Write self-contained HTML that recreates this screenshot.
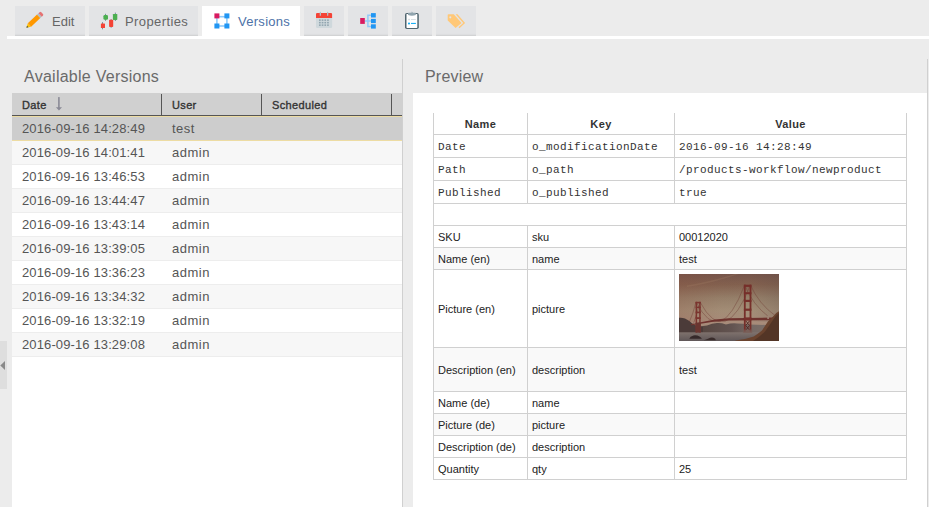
<!DOCTYPE html>
<html>
<head>
<meta charset="utf-8">
<title>Versions</title>
<style>
html,body{margin:0;padding:0;}
body{width:929px;height:507px;overflow:hidden;background:#ececec;position:relative;font-family:"Liberation Sans",sans-serif;color:#555;}
.abs{position:absolute;}
/* tab bar */
.tab{position:absolute;top:6px;height:30px;background:#e3e4e6;box-shadow:inset 0 -3px 2px -2px rgba(0,0,0,0.10);}
.tab.active{background:#fff;box-shadow:none;height:33px;}
.tab span{position:absolute;top:8px;font-size:13px;line-height:16px;color:#666;white-space:nowrap;}
.tab.active span{color:#4d72a8;}
.tab svg{position:absolute;left:0;top:0;}
#tabline{position:absolute;left:7px;top:36px;width:922px;height:3px;background:#fff;}
/* panels */
.ptitle{position:absolute;top:67px;font-size:16px;line-height:20px;color:#6a6a6a;white-space:nowrap;}
.vline{position:absolute;top:59px;width:1px;height:448px;background:#d0d0d0;}
#grid{position:absolute;left:12px;top:93px;width:390px;height:414px;background:#fff;}
#ghead{position:absolute;left:0;top:0;width:390px;height:22px;background:#d0d0d0;border-bottom:1px solid #555;}
#ghead span{position:absolute;top:5px;font-size:11px;line-height:14px;font-weight:normal;color:#333;-webkit-text-stroke:0.35px #333;letter-spacing:0.35px;white-space:nowrap;}
#ghead i{position:absolute;top:1px;width:1px;height:21px;background:#555;}
.row{position:absolute;left:0;width:390px;height:23px;border-bottom:1px solid #ededed;background:#fff;}
.row.alt{background:#f7f7f7;}
.row.sel{background:#cdcdcd;border-bottom:1px solid #eddca3;}
.row span{position:absolute;top:4px;font-size:13px;line-height:16px;color:#555;white-space:nowrap;}
.row .c1{left:10px;letter-spacing:0.12px;}
.row .c2{left:160px;letter-spacing:0.5px;}
#prev{position:absolute;left:413px;top:93px;width:514px;height:414px;background:#fff;}
table{position:absolute;left:20px;top:20px;border-collapse:collapse;table-layout:fixed;width:474px;}
td,th{border:1px solid #d0d0d0;padding:0 4px;font-size:11px;color:#222;text-align:left;vertical-align:middle;white-space:nowrap;overflow:hidden;}
th{font-weight:bold;letter-spacing:0.4px;text-align:center;height:21px;border-top:none;color:#333;}
tr.m td{font-family:"Liberation Mono",monospace;font-size:11px;letter-spacing:0.4px;height:20px;padding-top:2px;color:#333;}
tr.s td{height:21px;}
tr.g td{background:#f9f9f9;}
</style>
</head>
<body>

<!-- TABS -->
<div id="tabline"></div>
<div class="tab" style="left:15px;width:70px;"><span style="left:37px;">Edit</span></div>
<div class="tab" style="left:89px;width:109px;"><span style="left:36px;letter-spacing:0.4px;">Properties</span></div>
<div class="tab active" style="left:202px;width:98px;"><span style="left:36px;letter-spacing:0.28px;">Versions</span></div>
<div class="tab" style="left:304px;width:40px;"></div>
<div class="tab" style="left:348px;width:40px;"></div>
<div class="tab" style="left:392px;width:40px;"></div>
<div class="tab" style="left:436px;width:40px;"></div>

<!-- icons layer -->
<svg class="abs" style="left:0;top:0;" width="480" height="40" viewBox="0 0 480 40">
<!-- pencil -->
<g transform="translate(26.4,27.8) rotate(-43)">
  <polygon points="0,0 4.2,-2.4 4.2,2.4" fill="#ffc107"/>
  <polygon points="0,0 1.8,-1.05 1.8,1.05" fill="#37474f"/>
  <rect x="4.2" y="-2.4" width="12.6" height="4.8" fill="#ff9800"/>
  <rect x="16.8" y="-2.4" width="1.9" height="4.8" fill="#b0bec5"/>
  <path d="M18.7,-2.4 h1.6 a1.2,1.2 0 0 1 1.2,1.2 v2.4 a1.2,1.2 0 0 1 -1.2,1.2 h-1.6 z" fill="#e57373"/>
</g>
<!-- candlesticks -->
<g>
  <rect x="102.1" y="22.1" width="0.8" height="7.2" fill="#607d8b"/>
  <rect x="105.1" y="13.8" width="0.8" height="7" fill="#607d8b"/>
  <rect x="110.7" y="19" width="0.8" height="8.8" fill="#607d8b"/>
  <rect x="114.9" y="12.6" width="0.8" height="8.4" fill="#607d8b"/>
  <rect x="100.9" y="23.4" width="4.1" height="4.6" rx="0.6" fill="#f44336"/>
  <rect x="103.4" y="14.9" width="4.6" height="4.9" rx="1.4" fill="#4caf50"/>
  <rect x="109.1" y="19.8" width="4.1" height="7.2" rx="0.7" fill="#f44336"/>
  <rect x="112.9" y="13.9" width="4.4" height="6.1" rx="0.7" fill="#4caf50"/>
</g>
<!-- versions -->
<g>
  <rect x="216.2" y="15.9" width="11" height="1.6" fill="#90caf9"/>
  <rect x="216.2" y="25.2" width="11" height="1.6" fill="#90caf9"/>
  <rect x="216.1" y="16" width="1.6" height="10" fill="#90caf9"/>
  <rect x="226.1" y="16" width="1.6" height="10" fill="#90caf9"/>
  <rect x="214.4" y="13.4" width="5" height="5" fill="#d81b60"/>
  <rect x="224.4" y="13.4" width="5" height="5" fill="#2196f3"/>
  <rect x="214.4" y="23.5" width="5" height="5" fill="#2196f3"/>
  <rect x="224.4" y="23.5" width="5" height="5" fill="#2196f3"/>
</g>
<!-- calendar -->
<g>
  <path d="M316,17.5 h16.1 v9.3 a1.2,1.2 0 0 1 -1.2,1.2 h-13.7 a1.2,1.2 0 0 1 -1.2,-1.2 z" fill="#cfd8dc"/>
  <path d="M316,18 v-3.9 a1.2,1.2 0 0 1 1.2,-1.2 h13.7 a1.2,1.2 0 0 1 1.2,1.2 v3.9 z" fill="#f44336"/>
  <rect x="319.7" y="11.8" width="1.3" height="4" rx="0.6" fill="#b0bec5"/>
  <rect x="327" y="11.8" width="1.3" height="4" rx="0.6" fill="#b0bec5"/>
  <g fill="#90a4ae">
    <rect x="319" y="19.4" width="1.7" height="1.5"/><rect x="321.7" y="19.4" width="1.7" height="1.5"/><rect x="324.4" y="19.4" width="1.7" height="1.5"/><rect x="327.1" y="19.4" width="1.7" height="1.5"/>
    <rect x="319" y="21.9" width="1.7" height="1.5"/><rect x="321.7" y="21.9" width="1.7" height="1.5"/><rect x="324.4" y="21.9" width="1.7" height="1.5"/><rect x="327.1" y="21.9" width="1.7" height="1.5"/>
    <rect x="319" y="24.4" width="1.7" height="1.5"/><rect x="321.7" y="24.4" width="1.7" height="1.5"/><rect x="324.4" y="24.4" width="1.7" height="1.5"/><rect x="327.1" y="24.4" width="1.7" height="1.5"/>
  </g>
</g>
<!-- tree -->
<g>
  <path d="M364.8,21 h3.1 M371,15.3 h-3.1 v11.3 h3.1 M367.9,21 h3.1" fill="none" stroke="#90caf9" stroke-width="1.5"/>
  <rect x="360.2" y="18" width="4.6" height="5.9" fill="#d81b60"/>
  <rect x="371" y="13.1" width="4.8" height="4.4" fill="#2196f3"/>
  <rect x="371" y="18.9" width="4.8" height="4.2" fill="#2196f3"/>
  <rect x="371" y="24.3" width="4.8" height="4.3" fill="#2196f3"/>
</g>
<!-- clipboard -->
<g>
  <rect x="405" y="12.9" width="13.8" height="16.1" rx="1.8" fill="#50656f"/>
  <rect x="406.5" y="14" width="10.8" height="13.9" rx="0.6" fill="#fff"/>
  <path d="M408,15 v-1.6 q0,-0.6 0.6,-0.6 h2.2 a1.1,1.1 0 0 1 2.2,0 h2.2 q0.6,0 0.6,0.6 v1.6 q-3.9,1.4 -7.8,0 z" fill="#90a4ae"/>
  <circle cx="411.9" cy="12.3" r="0.5" fill="#e3e4e6"/>
  <rect x="408.3" y="18.8" width="1.5" height="1.5" fill="#cfd8dc"/>
  <rect x="411" y="19.2" width="4.8" height="0.8" fill="#cfd8dc"/>
  <circle cx="409" cy="23.4" r="1" fill="#03a9f4"/>
  <rect x="411" y="22.9" width="4.9" height="1" fill="#03a9f4"/>
</g>
<!-- tags -->
<g fill="#ffc878">
  <path d="M448.5,14.2 h5.3 l7.7,8.7 l-5.9,5.2 l-7.9,-7.5 v-5.6 q0,-0.8 0.8,-0.8 z M450.3,16.2 a1,1 0 1 0 0.01,0 z" fill-rule="evenodd"/>
  <path d="M455.6,14.2 h1.9 l7.6,8.7 l-5.6,5.3 l-1,-1 l4.7,-4.3 z"/>
</g>
</svg>

<!-- LEFT PANEL -->
<div class="abs" style="left:0;top:341px;width:7px;height:48px;background:#dedede;"></div>
<svg class="abs" style="left:0;top:360px;" width="7" height="12" viewBox="0 0 7 12"><polygon points="0.3,5.5 5,1 5,10" fill="#8a8a8a"/></svg>
<div class="ptitle" style="left:24px;letter-spacing:0.26px;">Available Versions</div>
<div class="vline" style="left:402px;"></div>
<div id="grid">
  <div id="ghead">
    <span style="left:10px;">Date</span>
    <svg class="abs" style="left:43px;top:3px;" width="8" height="16" viewBox="0 0 8 16"><rect x="3.1" y="1.1" width="1.6" height="11" fill="#8a8a96"/><polygon points="0.9,11.2 7,11.2 3.95,14.6" fill="#8a8a96"/></svg>
    <span style="left:160px;">User</span>
    <span style="left:260px;">Scheduled</span>
    <i style="left:149px;"></i><i style="left:249px;"></i><i style="left:379px;"></i>
  </div>
  <div class="abs" style="left:0;top:23px;width:390px;height:1px;background:#eddca3;"></div>
  <div class="row sel" style="top:24px;"><span class="c1">2016-09-16 14:28:49</span><span class="c2">test</span></div>
  <div class="row alt" style="top:48px;"><span class="c1">2016-09-16 14:01:41</span><span class="c2">admin</span></div>
  <div class="row" style="top:72px;"><span class="c1">2016-09-16 13:46:53</span><span class="c2">admin</span></div>
  <div class="row alt" style="top:96px;"><span class="c1">2016-09-16 13:44:47</span><span class="c2">admin</span></div>
  <div class="row" style="top:120px;"><span class="c1">2016-09-16 13:43:14</span><span class="c2">admin</span></div>
  <div class="row alt" style="top:144px;"><span class="c1">2016-09-16 13:39:05</span><span class="c2">admin</span></div>
  <div class="row" style="top:168px;"><span class="c1">2016-09-16 13:36:23</span><span class="c2">admin</span></div>
  <div class="row alt" style="top:192px;"><span class="c1">2016-09-16 13:34:32</span><span class="c2">admin</span></div>
  <div class="row" style="top:216px;"><span class="c1">2016-09-16 13:32:19</span><span class="c2">admin</span></div>
  <div class="row alt" style="top:240px;"><span class="c1">2016-09-16 13:29:08</span><span class="c2">admin</span></div>
</div>

<!-- RIGHT PANEL -->
<div class="ptitle" style="left:425px;letter-spacing:0.2px;">Preview</div>
<div class="vline" style="left:927px;"></div>
<div id="prev">
<table>
  <colgroup><col style="width:94px"><col style="width:147px"><col style="width:232px"></colgroup>
  <tr><th>Name</th><th>Key</th><th>Value</th></tr>
  <tr class="m"><td>Date</td><td>o_modificationDate</td><td>2016-09-16 14:28:49</td></tr>
  <tr class="m"><td>Path</td><td>o_path</td><td>/products-workflow/newproduct</td></tr>
  <tr class="m"><td>Published</td><td>o_published</td><td>true</td></tr>
  <tr class="s"><td colspan="3"></td></tr>
  <tr class="s"><td>SKU</td><td>sku</td><td>00012020</td></tr>
  <tr class="s g"><td>Name (en)</td><td>name</td><td>test</td></tr>
  <tr class="s"><td style="height:77px;">Picture (en)</td><td>picture</td><td><svg id="pic" width="100" height="67" viewBox="0 0 100 67" style="display:block;position:relative;top:-1px;">
<defs>
<linearGradient id="sky" x1="0" y1="0" x2="0" y2="1">
<stop offset="0" stop-color="#76554a"/><stop offset="0.16" stop-color="#83614f"/><stop offset="0.36" stop-color="#96806a"/><stop offset="0.55" stop-color="#a48f78"/><stop offset="0.72" stop-color="#a88c7a"/><stop offset="1" stop-color="#937e70"/>
</linearGradient>
<linearGradient id="skyl" x1="0" y1="0" x2="1" y2="0">
<stop offset="0" stop-color="#8a4c3c" stop-opacity="0.22"/><stop offset="0.4" stop-color="#8a4c3c" stop-opacity="0.04"/><stop offset="0.7" stop-color="#5a4a44" stop-opacity="0"/><stop offset="1" stop-color="#5a4a44" stop-opacity="0.22"/>
</linearGradient>
<linearGradient id="wat" x1="0" y1="0" x2="0" y2="1">
<stop offset="0" stop-color="#7f726d"/><stop offset="1" stop-color="#5f5657"/>
</linearGradient>
<linearGradient id="haze" x1="0" y1="0" x2="1" y2="0">
<stop offset="0" stop-color="#55453f"/><stop offset="0.45" stop-color="#625350"/><stop offset="0.7" stop-color="#756863"/><stop offset="1" stop-color="#7c6f69"/>
</linearGradient>
</defs>
<rect width="100" height="67" fill="url(#sky)"/>
<rect width="100" height="48" fill="url(#skyl)"/>
<path d="M8,11.5 Q30,8 56,0 L60,0 Q32,9.5 8,13 z" fill="#a37d66" opacity="0.28"/>
<!-- far hills between/after towers -->
<path d="M20,52.5 Q24,52 28,51.4 Q33,49.4 38,49 Q42,48.6 47,50.4 Q52,49 58,49.4 Q64,49.4 70,50.4 Q80,50.6 92,51.4 L92,60 L20,60 z" fill="url(#haze)"/>
<!-- left hill -->
<path d="M0,43.8 Q3,43.3 6,44.6 Q10,46.6 13,49.2 Q16,51.4 21,52.4 L24,53 L24,59 L0,59 z" fill="#4b3b39"/>
<!-- water -->
<rect x="0" y="58.3" width="100" height="8.7" fill="url(#wat)"/>
<!-- cables -->
<g fill="none" stroke="#6e3a32" stroke-width="0.5" opacity="0.8">
<path d="M65.6,11 Q41.3,75 17,28"/>
<path d="M71.4,11 Q46.2,75 21,28"/>
<path d="M71.4,11 Q80,30 96,41.5"/>
<path d="M65.6,11 Q74,31 89.5,42.6"/>
<path d="M17,28 Q14,40 10.5,47.5"/>
<path d="M21,28 Q18,40 14.5,49.5"/>
</g>
<!-- deck -->
<path d="M12,50.2 Q18,49.4 21.7,48.2 Q36,45 50,44.3 Q70,43.6 94,43.6 L94,46.2 Q70,46.2 50,46.4 Q36,46.8 21.7,49.8 Q18,50.8 12,51.2 z" fill="#6e332e"/>
<!-- left tower -->
<g fill="#7b352f">
<rect x="16.6" y="27.8" width="1.5" height="30.7"/><rect x="20.2" y="27.8" width="1.5" height="30.7"/>
<rect x="16.6" y="27.8" width="5.1" height="1.6"/><rect x="16.6" y="32.6" width="5.1" height="1.5"/><rect x="16.6" y="37.6" width="5.1" height="1.6"/><rect x="16.6" y="43.2" width="5.1" height="1.8"/>
<rect x="16.6" y="48.5" width="5.1" height="10" fill="#6a3530"/>
</g>
<!-- main tower -->
<g fill="#762f2a">
<rect x="64.9" y="10.7" width="1.8" height="46.8"/><rect x="70.6" y="10.7" width="1.8" height="46.8"/>
<rect x="64.9" y="10.7" width="7.5" height="2.2"/><rect x="64.9" y="18.2" width="7.5" height="2"/><rect x="64.9" y="25.8" width="7.5" height="2.2"/><rect x="64.9" y="34.6" width="7.5" height="2.2"/><rect x="64.9" y="43.4" width="7.5" height="3"/>
</g>
<path d="M66.9,47 l3.5,4.4 m0,-4.4 l-3.5,4.4 M66.9,51.6 l3.5,4.4 m0,-4.4 l-3.5,4.4" stroke="#4e2420" stroke-width="0.9" fill="none"/>
<rect x="64.2" y="55.5" width="9" height="3.5" fill="#7a5c56" opacity="0.7"/>
<rect x="88.3" y="41.6" width="1.6" height="3.4" fill="#a08676"/>
<!-- right cliff -->
<path d="M100,37.2 Q97,38.6 95,41.4 Q92,44.6 88.9,47.5 Q86,52 83,56.6 Q79,60 74.8,62.4 Q66,65.4 56.6,66.6 L56,67 L100,67 z" fill="#6a432e"/>
<path d="M100,39 Q96.5,41.5 94,46 Q90,52 86,57.5 Q81,62.5 74,67 L100,67 z" fill="#4f3325" opacity="0.85"/>
<!-- rocks -->
<path d="M10.3,64.7 Q11,62.4 14.5,61.4 Q18,61 20.5,62.4 Q22.8,63.6 22.8,64.7 z" fill="#35292a"/>
<path d="M24.8,66.2 Q27,65.4 29.5,64.4 Q32,63.2 34.5,63.8 Q36.8,64.8 36.8,66.2 z" fill="#392c2b"/>
</svg></td></tr>
  <tr class="s g"><td style="height:43px;">Description (en)</td><td>description</td><td>test</td></tr>
  <tr class="s"><td>Name (de)</td><td>name</td><td></td></tr>
  <tr class="s g"><td>Picture (de)</td><td>picture</td><td></td></tr>
  <tr class="s"><td>Description (de)</td><td>description</td><td></td></tr>
  <tr class="s"><td>Quantity</td><td>qty</td><td>25</td></tr>
</table>
</div>

</body>
</html>
